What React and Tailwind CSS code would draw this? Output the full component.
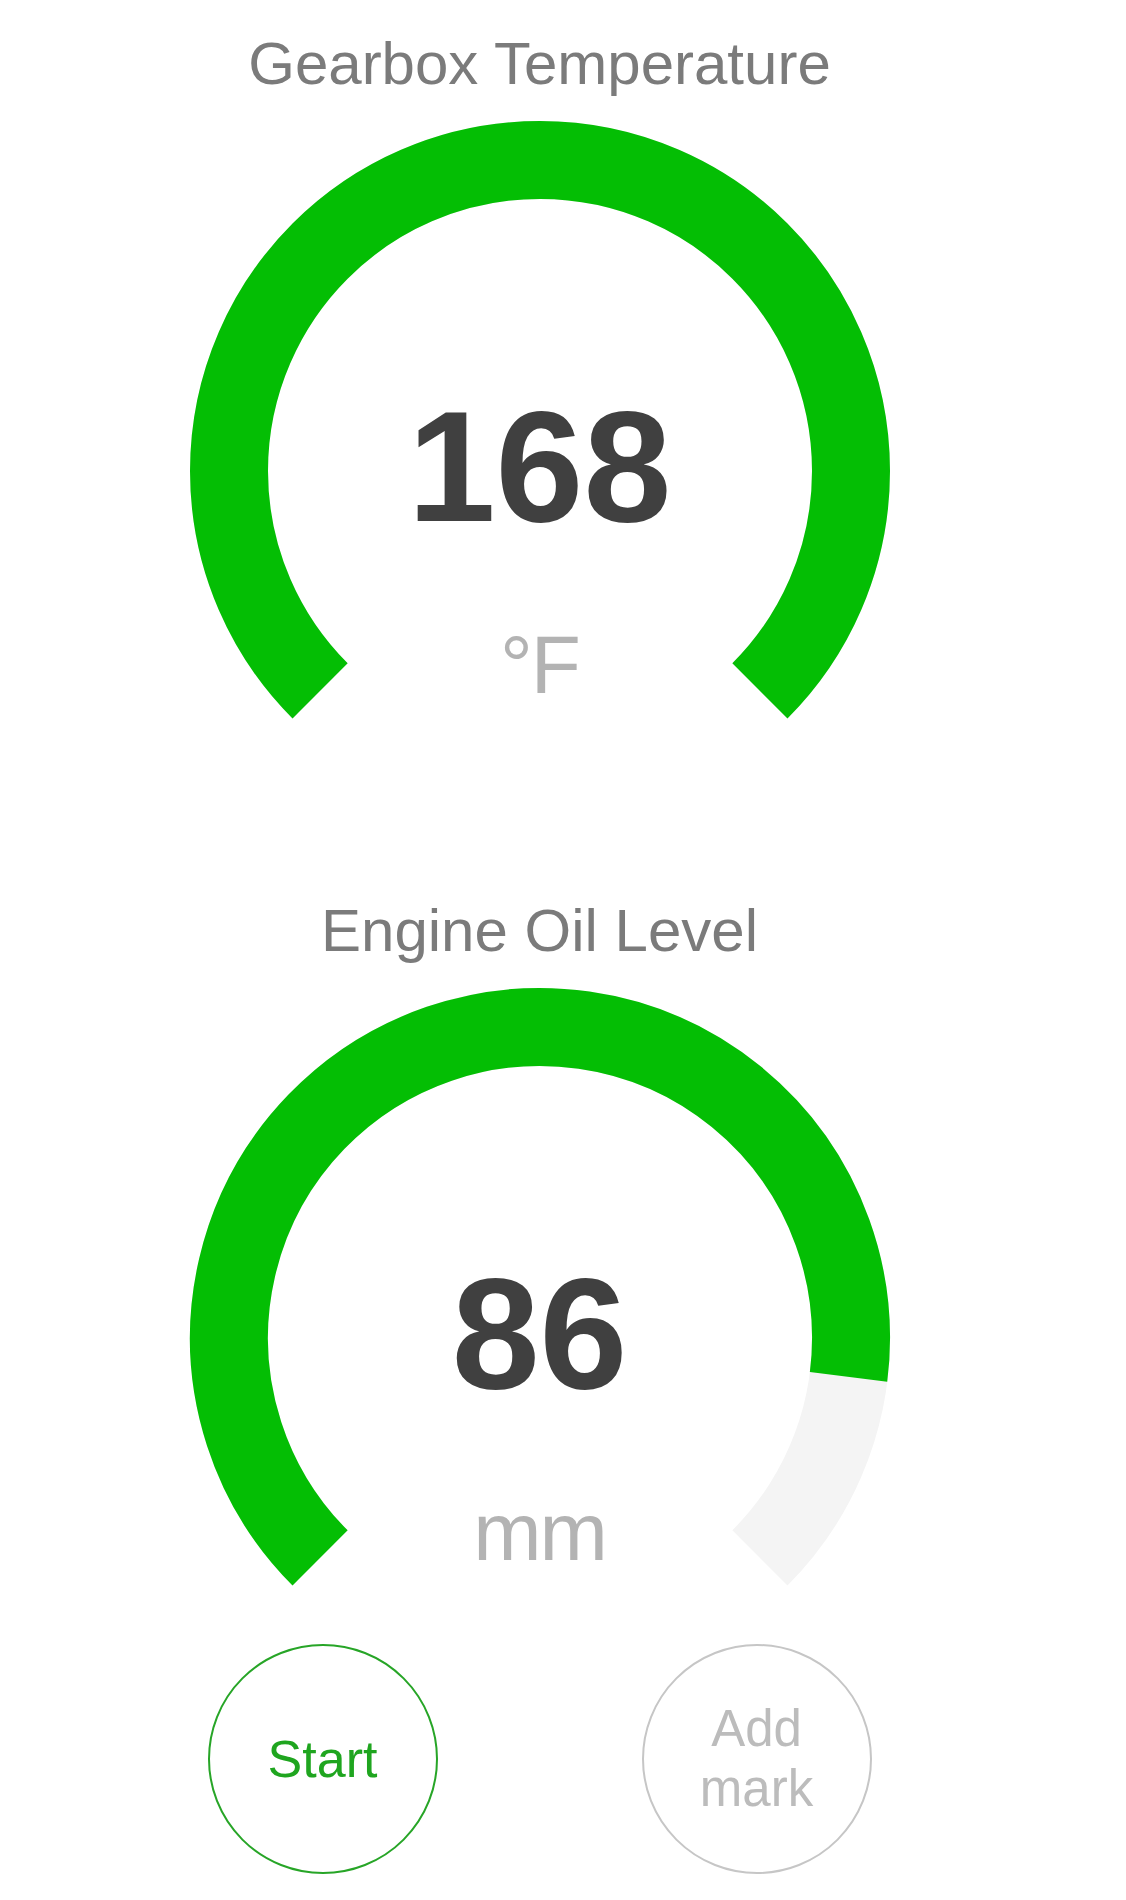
import React from 'react';

const GREEN = '#04be04';
const TRACK = '#f4f4f4';

// arc geometry: 270° sweep, opening at the bottom
const CX = 351;
const CY = 351;
const R = 311;
const STROKE = 78;
const START = 225;
const SPAN = 270;

const point = (deg) => {
    const rad = (deg * Math.PI) / 180;
    return [CX + R * Math.cos(rad), CY - R * Math.sin(rad)];
};

const arcPath = (fraction) => {
    const sweep = SPAN * Math.min(Math.max(fraction, 0), 1);
    const [x1, y1] = point(START);
    const [x2, y2] = point(START - sweep);
    const large = sweep > 180 ? 1 : 0;
    return `M ${x1} ${y1} A ${R} ${R} 0 ${large} 1 ${x2} ${y2}`;
};

const Gauge = ({ title, value, unit, max = 100 }) => {
    return (
        <section className="flex flex-col items-center">
            <h2 className="pt-[34px] text-[60px] leading-[59px] font-normal text-[#7b7b7b]">
                {title}
            </h2>
            <div className="relative mt-[27px] w-[702px] h-[600px]">
                <svg className="absolute inset-0" width="702" height="600" viewBox="0 0 702 600">
                    <path d={arcPath(1)} fill="none" stroke={TRACK} strokeWidth={STROKE} />
                    <path d={arcPath(value / max)} fill="none" stroke={GREEN} strokeWidth={STROKE} />
                </svg>
                {/* Reading */}
                <div className="absolute left-0 right-0 top-[267px] text-center text-[158px] leading-[158px] font-bold text-[#404040]">
                    {value}
                </div>
                <div className="absolute left-0 right-0 top-[504px] text-center text-[82px] leading-[82px] tracking-[-2px] text-[#b3b3b3]">
                    {unit}
                </div>
            </div>
        </section>
    );
};

const App = () => {
    return (
        <div className="min-h-[1900px] bg-white" style={{ fontFamily: '"Liberation Sans", Arial, sans-serif' }}>
            <div className="w-[1079px] flex flex-col items-center">
                <Gauge title="Gearbox Temperature" value={168} unit="°F" />
                <div className="h-[147px]" />
                <Gauge title="Engine Oil Level" value={86} unit="mm" />

                {/* Controls */}
                <div className="mt-[57px] flex gap-[204px]">
                    <button className="w-[230px] h-[230px] rounded-full border-[2.5px] border-[#27a527] flex items-center justify-center text-[52px] leading-[60px] text-[#1fa51f]">
                        Start
                    </button>
                    <button className="w-[230px] h-[230px] rounded-full border-[2.5px] border-[#c6c6c6] flex items-center justify-center text-[51px] leading-[60px] text-[#bcbcbc]">
                        Add
                        <br />
                        mark
                    </button>
                </div>
            </div>
        </div>
    );
};

export default App;
